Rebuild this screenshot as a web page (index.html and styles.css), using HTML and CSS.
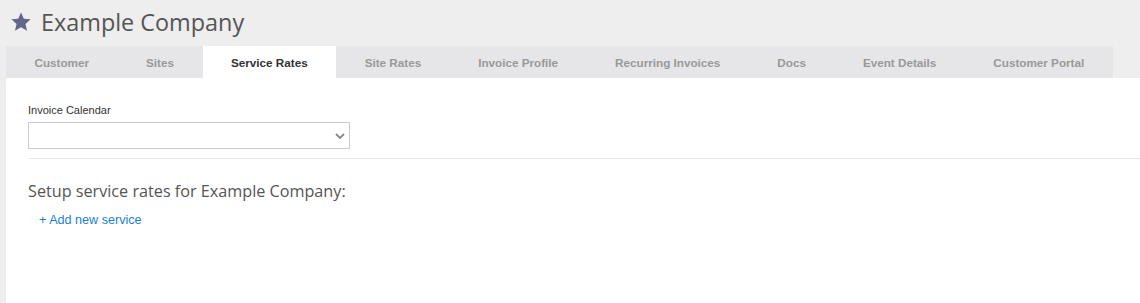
FILE: index.html
```html
<!DOCTYPE html>
<html lang="en">
<head>
  <meta charset="UTF-8" />
  <title>Example Company</title>
  <link rel="stylesheet" href="styles.css">
</head>
<body>

<header class="page-title">
  <svg class="star" viewBox="0 0 24 24" width="22" height="22">
    <path d="M12 1.5l3.1 6.9 7.4.7-5.6 5 1.7 7.4L12 17.7l-6.6 3.8 1.7-7.4-5.6-5 7.4-.7z" fill="#61678a"/>
  </svg>
  <h1>Example Company</h1>
</header>

<nav class="tabs">
  <a class="tab">Customer</a>
  <a class="tab">Sites</a>
  <a class="tab active">Service Rates</a>
  <a class="tab">Site Rates</a>
  <a class="tab">Invoice Profile</a>
  <a class="tab">Recurring Invoices</a>
  <a class="tab">Docs</a>
  <a class="tab">Event Details</a>
  <a class="tab">Customer Portal</a>
</nav>

<main class="panel">
  <div class="field">
    <label for="calendar">Invoice Calendar</label>
    <div class="select-wrap">
      <select id="calendar"><option></option></select>
      <svg class="chevron" viewBox="0 0 10 6" width="10" height="6">
        <path d="M1 1l4 4 4-4" fill="none" stroke="#888" stroke-width="1.8"/>
      </svg>
    </div>
  </div>
  <hr class="divider">
  <h2>Setup service rates for Example Company:</h2>
  <a class="add-link" href="#">+ Add new service</a>
</main>

</body>
</html>
```

FILE: styles.css
```css
body {
  margin: 0;
  background: #eeeeee;
  font-family: 'Liberation Sans', Arial, sans-serif;
  color: #333;
}

.page-title {
  display: flex;
  align-items: center;
  gap: 9px;
  height: 46px;
  padding-left: 10px;
}

.star {
  margin-top: -2px;
}

.page-title h1 {
  margin: 0;
  font-family: 'Open Sans', sans-serif;
  font-weight: normal;
  font-size: 23.4px;
  color: #555;
  margin-top: -2px;
}

.tabs {
  display: inline-flex;
  margin-left: 6px;
  background: #e6e6e8;
  height: 32px;
}

.tab {
  display: flex;
  align-items: center;
  padding: 0 28.5px;
  font-size: 11.7px;
  font-weight: bold;
  color: #999;
  cursor: pointer;
}

.tab.active {
  background: #fff;
  color: #333;
}

.panel {
  background: #fff;
  margin-left: 6px;
  border-top-left-radius: 3px;
  padding: 26px 0 80px 22px;
}

.field label {
  display: block;
  font-size: 11px;
  color: #333;
  margin-bottom: 6px;
}

.select-wrap {
  position: relative;
  width: 322px;
}

.select-wrap select {
  display: block;
  width: 100%;
  height: 27px;
  border: 1px solid #ccc;
  border-radius: 0;
  background: #fff;
  appearance: none;
}

.chevron {
  position: absolute;
  right: 5px;
  top: 11px;
}

.divider {
  border: none;
  border-top: 1px solid #e8e8e8;
  margin: 9px 0 0;
}

.panel h2 {
  margin: 21px 0 0;
  font-family: 'Open Sans', sans-serif;
  font-weight: normal;
  font-size: 16.2px;
  color: #555;
}

.add-link {
  display: inline-block;
  margin: 11px 0 0 11px;
  font-size: 12.6px;
  color: #1a7fd4;
  text-decoration: none;
}
```
